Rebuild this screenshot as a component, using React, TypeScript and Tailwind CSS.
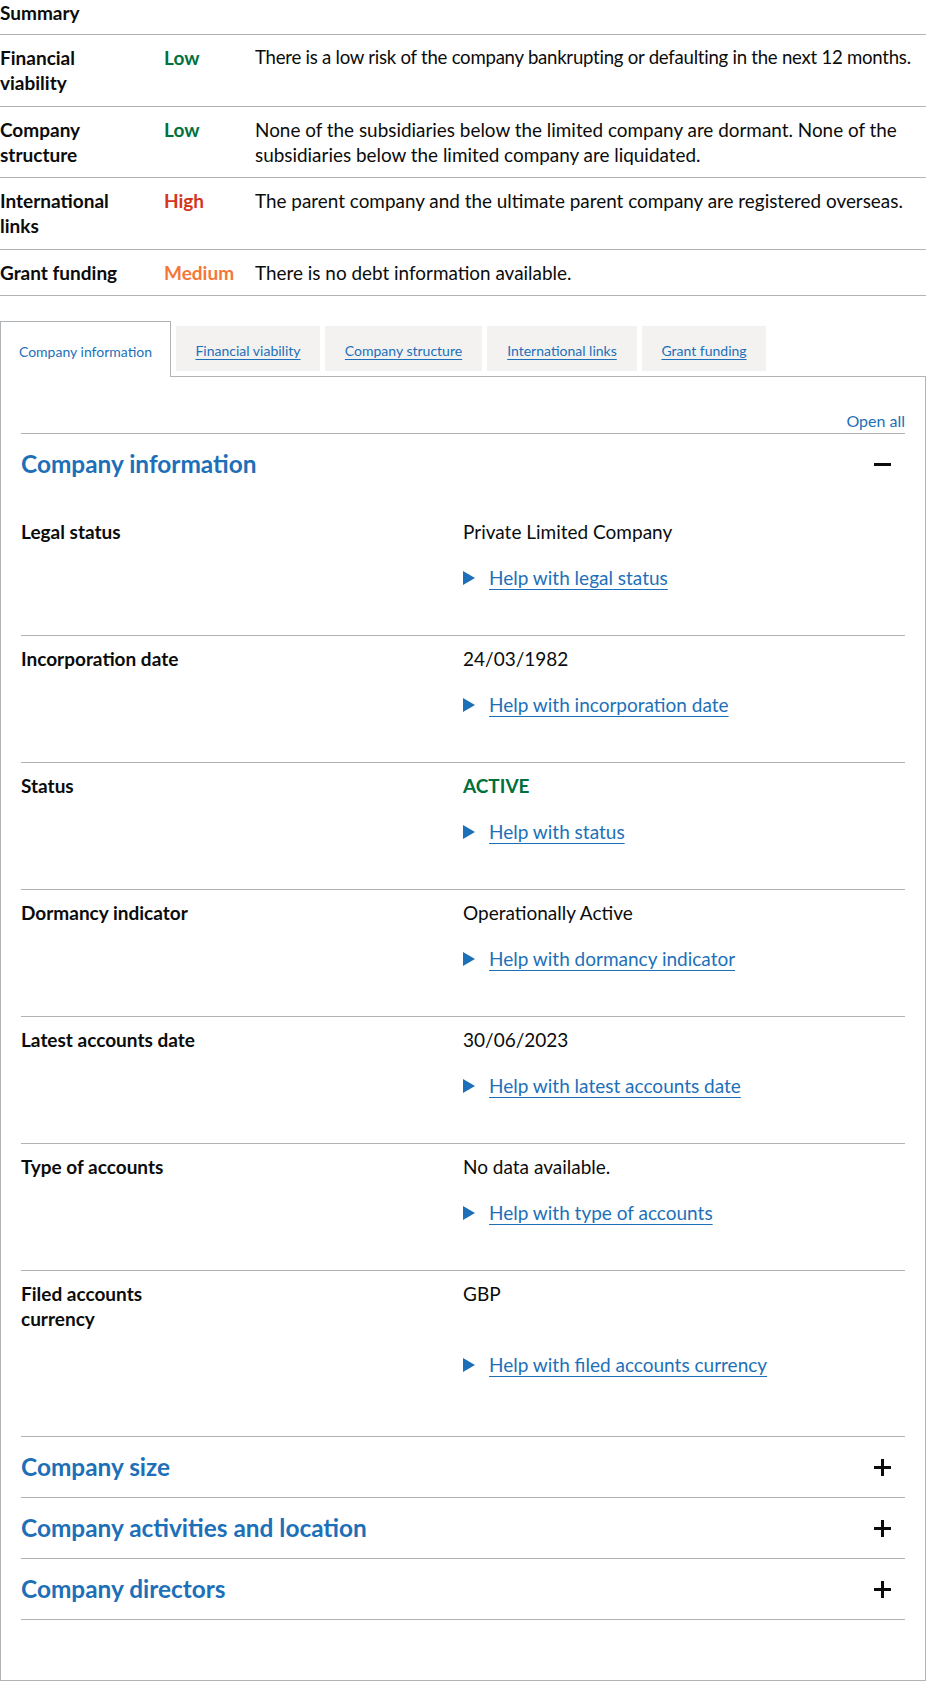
import { Fragment } from 'react'

const summaryRows = [
  {
    label: 'Financial viability',
    rating: 'Low',
    ratingClass: 'text-[#00703c]',
    textClass: 'text-[18.6px] tracking-[-0.25px]',
    text: 'There is a low risk of the company bankrupting or defaulting in the next 12 months.',
  },
  {
    label: 'Company structure',
    rating: 'Low',
    ratingClass: 'text-[#00703c]',
    textClass: 'text-[18.9px]',
    text: 'None of the subsidiaries below the limited company are dormant. None of the subsidiaries below the limited company are liquidated.',
  },
  {
    label: 'International links',
    rating: 'High',
    ratingClass: 'text-[#d4351c]',
    textClass: 'text-[18.9px]',
    text: 'The parent company and the ultimate parent company are registered overseas.',
  },
  {
    label: 'Grant funding',
    rating: 'Medium',
    ratingClass: 'text-[#f47738]',
    textClass: 'text-[18.9px]',
    text: 'There is no debt information available.',
  },
]

const tabs = [
  { label: 'Company information', width: 'w-[171px]' },
  { label: 'Financial viability', width: 'w-[144px]' },
  { label: 'Company structure', width: 'w-[157px]' },
  { label: 'International links', width: 'w-[150px]' },
  { label: 'Grant funding', width: 'w-[124px]' },
]

const infoRows = [
  { label: 'Legal status', value: 'Private Limited Company', help: 'Help with legal status' },
  { label: 'Incorporation date', value: '24/03/1982', help: 'Help with incorporation date' },
  { label: 'Status', value: 'ACTIVE', help: 'Help with status', status: true },
  { label: 'Dormancy indicator', value: 'Operationally Active', help: 'Help with dormancy indicator' },
  { label: 'Latest accounts date', value: '30/06/2023', help: 'Help with latest accounts date' },
  { label: 'Type of accounts', value: 'No data available.', help: 'Help with type of accounts' },
  { label: 'Filed accounts currency', value: 'GBP', help: 'Help with filed accounts currency' },
]

const closedSections = ['Company size', 'Company activities and location', 'Company directors']

function MinusIcon() {
  return <span className="block w-[17px] h-[3px] bg-[#0b0c0c]" />
}

function PlusIcon() {
  return (
    <svg width="17" height="17" viewBox="0 0 17 17" aria-hidden="true">
      <rect x="0" y="7" width="17" height="3" fill="#0b0c0c" />
      <rect x="7" y="0" width="3" height="17" fill="#0b0c0c" />
    </svg>
  )
}

function HelpLink({ text }: { text: string }) {
  return (
    <div className="flex items-center text-[#1d70b8]">
      <svg width="12" height="14" viewBox="0 0 12 14" className="mr-[14px] shrink-0" aria-hidden="true">
        <polygon points="0,0 12,7 0,14" fill="#1d70b8" />
      </svg>
      <span className="underline decoration-1 underline-offset-[4px]">{text}</span>
    </div>
  )
}

function SummaryTable() {
  return (
    <div>
      <div className="h-[35px] font-bold border-b border-[#b1b4b6]">Summary</div>
      {summaryRows.map((row) => (
        <div key={row.label} className="flex py-[10px] border-b border-[#b1b4b6] leading-[25.3px]">
          <div className="w-[164px] shrink-0 pr-[20px] font-bold">{row.label}</div>
          <div className={`w-[91px] shrink-0 font-bold ${row.ratingClass}`}>{row.rating}</div>
          <div className={`flex-1 ${row.textClass}`}>{row.text}</div>
        </div>
      ))}
    </div>
  )
}

export default function App() {
  return (
    <div className="w-[926px] bg-white font-[Lato,sans-serif] text-[19px] leading-[25px] text-[#0b0c0c]">
      <SummaryTable />

      <div className="mt-[25px]">
        {/* tab list */}
        <div className="relative z-10 flex items-start gap-[5px] h-[56px] -mb-px text-[14px] leading-[20px]">
          {tabs.map((tab, i) =>
            i === 0 ? (
              <div
                key={tab.label}
                className={`${tab.width} h-[56px] bg-white border-x border-t border-[#b1b4b6] pt-[20px] text-center text-[#1d70b8]`}
              >
                {tab.label}
              </div>
            ) : (
              <div
                key={tab.label}
                className={`${tab.width} h-[45px] mt-[5px] bg-[#f3f2f1] pt-[15px] text-center text-[#1d70b8]`}
              >
                <span className="underline decoration-1 underline-offset-[3px]">{tab.label}</span>
              </div>
            ),
          )}
        </div>

        {/* panel */}
        <div className="border border-[#b1b4b6] px-[20px] pt-[31px] pb-[60px]">
          <div className="flex justify-end h-[25px] text-[16px] leading-[25px] text-[#1d70b8]">Open all</div>

          <div className="border-t border-[#b1b4b6]">
            <div className="flex items-center justify-between py-[15px]">
              <h2 className="text-[24.4px] leading-[30px] font-bold text-[#1d70b8]">Company information</h2>
              <span className="mr-[14px]">
                <MinusIcon />
              </span>
            </div>
            <div className="pt-[15px] pb-[14px]">
              {infoRows.map((row, i) => (
                <div
                  key={row.label}
                  className={`grid grid-cols-[442px_1fr] pt-[10px] pb-[45px] ${
                    i < infoRows.length - 1 ? 'border-b border-[#b1b4b6]' : ''
                  }`}
                >
                  <div className="w-[190px] font-bold">{row.label}</div>
                  <div className={row.status ? 'font-bold text-[#00703c]' : ''}>{row.value}</div>
                  <Fragment>
                    <div />
                    <div className="mt-[21px]">
                      <HelpLink text={row.help} />
                    </div>
                  </Fragment>
                </div>
              ))}
            </div>
          </div>

          {closedSections.map((title, i) => (
            <div
              key={title}
              className={`flex items-center justify-between py-[15px] border-t border-[#b1b4b6] ${
                i === closedSections.length - 1 ? 'border-b' : ''
              }`}
            >
              <h2 className="text-[24.4px] leading-[30px] font-bold text-[#1d70b8]">{title}</h2>
              <span className="mr-[14px]">
                <PlusIcon />
              </span>
            </div>
          ))}
        </div>
      </div>
    </div>
  )
}
